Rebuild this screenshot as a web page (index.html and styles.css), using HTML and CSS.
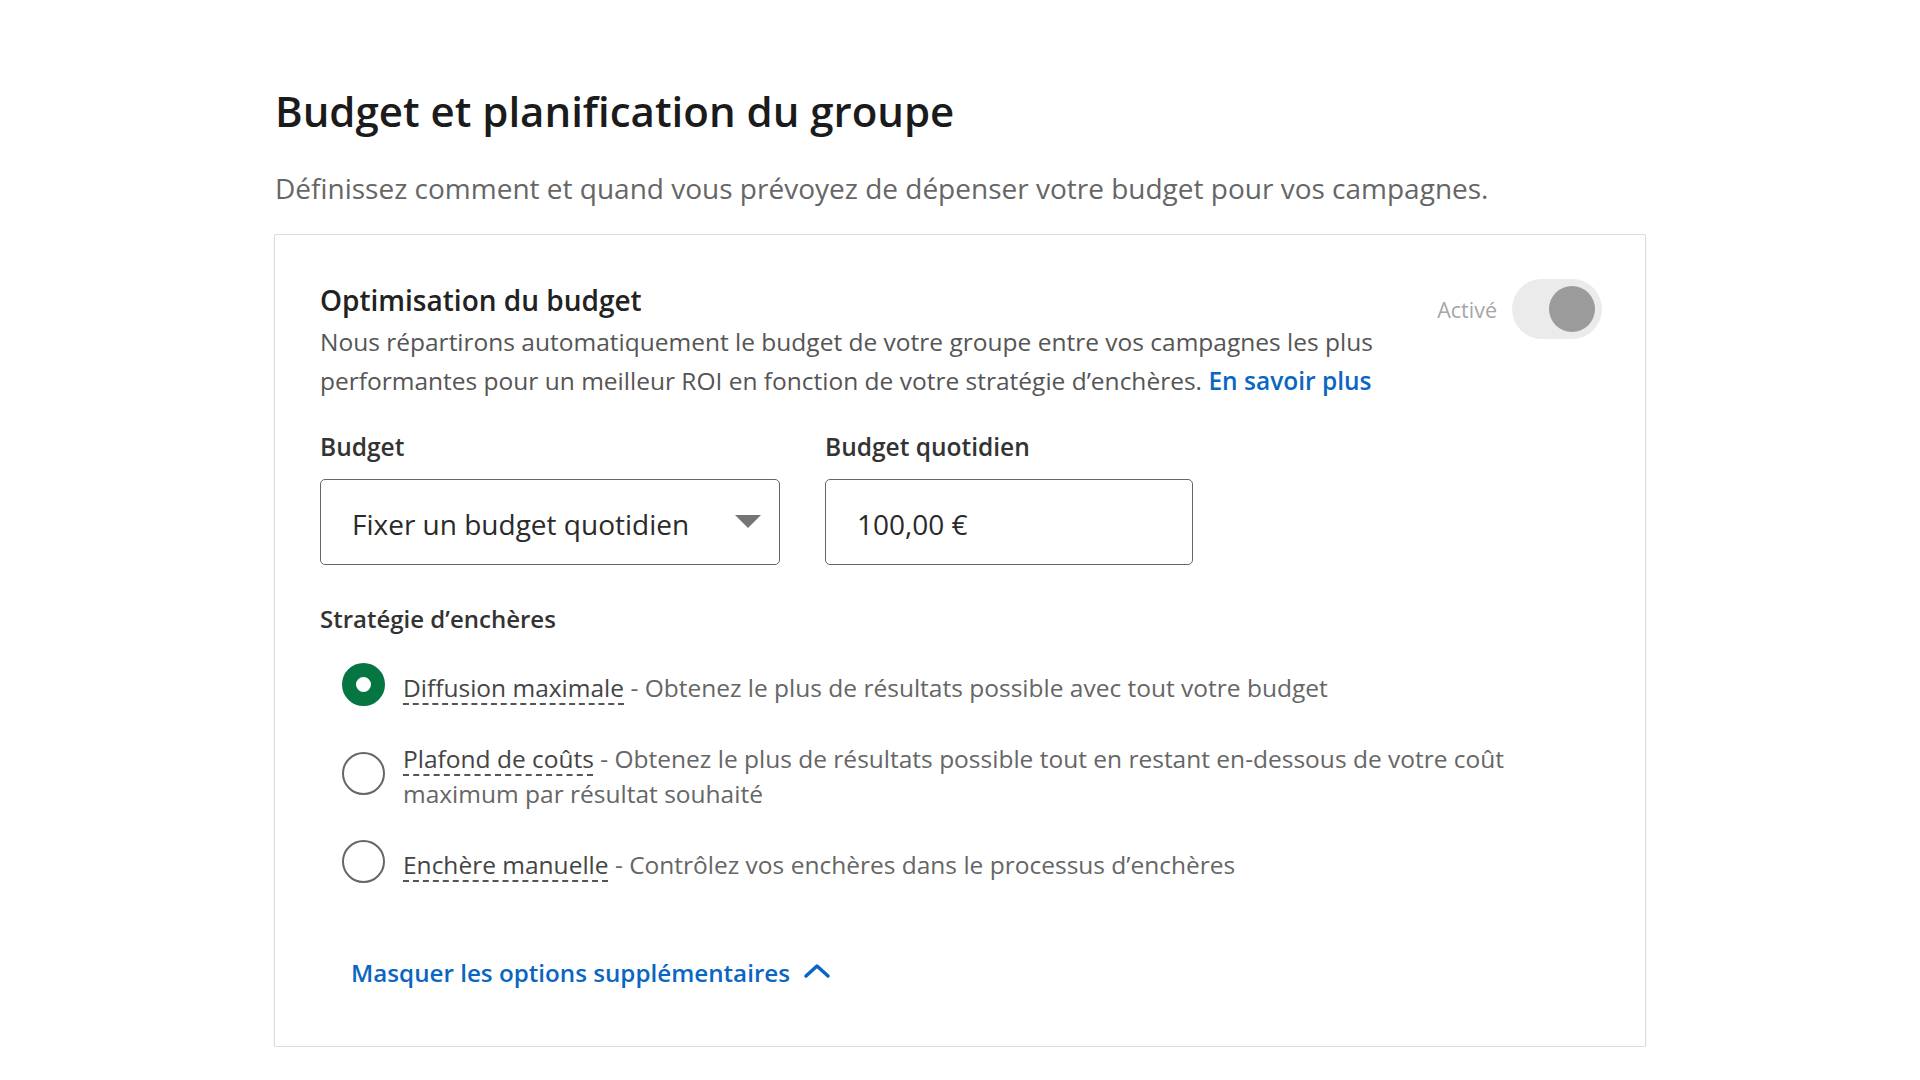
FILE: index.html
```html
<!DOCTYPE html>
<html lang="fr">
<head>
<meta charset="utf-8">
<title>Budget et planification du groupe</title>
<link rel="stylesheet" href="styles.css">
</head>
<body>
<main class="page">
  <h1 class="title">Budget et planification du groupe</h1>
  <p class="subtitle">Définissez comment et quand vous prévoyez de dépenser votre budget pour vos campagnes.</p>

  <section class="card">
    <div class="opt-header">
      <div class="opt-text">
        <h2 class="opt-title">Optimisation du budget</h2>
        <p class="opt-desc">Nous répartirons automatiquement le budget de votre groupe entre vos campagnes les plus performantes pour un meilleur ROI en fonction de votre stratégie d’enchères. <a class="link" href="#">En savoir plus</a></p>
      </div>
      <div class="switch">
        <span class="switch-label">Activé</span>
        <span class="switch-track"><span class="switch-knob"></span></span>
      </div>
    </div>

    <div class="fields">
      <div class="field">
        <span class="field-label">Budget</span>
        <div class="select">
          <span class="control-value">Fixer un budget quotidien</span>
          <svg class="select-arrow" width="26" height="13" viewBox="0 0 26 13"><polygon points="0,0 26,0 13,13" fill="#757575"/></svg>
        </div>
      </div>
      <div class="field">
        <span class="field-label">Budget quotidien</span>
        <div class="input">
          <span class="control-value">100,00 €</span>
        </div>
      </div>
    </div>

    <h3 class="section-label">Stratégie d’enchères</h3>
    <ul class="radios">
      <li class="radio-row">
        <span class="radio radio-checked"></span>
        <span class="radio-text"><span class="radio-name">Diffusion maximale</span> - Obtenez le plus de résultats possible avec tout votre budget</span>
      </li>
      <li class="radio-row">
        <span class="radio"></span>
        <span class="radio-text"><span class="radio-name">Plafond de coûts</span> - Obtenez le plus de résultats possible tout en restant en-dessous de votre coût maximum par résultat souhaité</span>
      </li>
      <li class="radio-row">
        <span class="radio"></span>
        <span class="radio-text"><span class="radio-name">Enchère manuelle</span> - Contrôlez vos enchères dans le processus d’enchères</span>
      </li>
    </ul>

    <a class="more-link" href="#">Masquer les options supplémentaires
      <svg class="chevron" width="30" height="18" viewBox="0 0 30 18"><polyline points="4,14 15,4 26,14" fill="none" stroke="#0a66c2" stroke-width="3.5" stroke-linecap="round" stroke-linejoin="round"/></svg>
    </a>
  </section>
</main>
</body>
</html>
```

FILE: styles.css
```css
* { box-sizing: border-box; }

html, body {
  margin: 0;
  padding: 0;
  background: #ffffff;
}

body {
  font-family: "Open Sans", "Noto Sans", "Liberation Sans", sans-serif;
  color: #333333;
}

.page {
  width: 1372px;
  margin-left: 274px;
  padding-top: 86px;
}

.title {
  margin: 0;
  padding-left: 1px;
  font-size: 42px;
  line-height: 50px;
  font-weight: 600;
  font-stretch: 88%;
  color: #1b1b1b;
}

.subtitle {
  margin: 36px 0 0;
  padding-left: 1px;
  font-size: 28px;
  line-height: 32px;
  font-weight: 400;
  color: #666666;
}

.card {
  margin-top: 30px;
  border: 1px solid #dcdcdc;
  border-radius: 2px;
  box-shadow: 0 1px 2px rgba(0, 0, 0, 0.08);
  padding: 50px 43px 58px 45px;
  background: #ffffff;
}

.opt-header {
  display: flex;
  align-items: flex-start;
  justify-content: space-between;
}

.opt-text {
  width: 1100px;
}

.opt-title {
  margin: 0;
  font-size: 28px;
  line-height: 30px;
  font-weight: 600;
  color: #222222;
}

.opt-desc {
  margin: 7px 0 0;
  font-size: 24.5px;
  line-height: 39px;
  color: #555555;
}

.link {
  color: #0a66c2;
  font-weight: 600;
  text-decoration: none;
}

.switch {
  display: flex;
  align-items: center;
  gap: 15px;
  margin-top: -6px;
}

.switch-label {
  font-size: 21.5px;
  color: #a6a6a6;
}

.switch-track {
  display: flex;
  justify-content: flex-end;
  align-items: center;
  width: 90px;
  height: 60px;
  padding: 0 7px;
  border-radius: 30px;
  background: #ebebeb;
}

.switch-knob {
  width: 46px;
  height: 46px;
  border-radius: 50%;
  background: #9b9b9b;
}

.fields {
  display: flex;
  gap: 45px;
  margin-top: 32px;
}

.field {
  display: flex;
  flex-direction: column;
  gap: 17px;
}

.field-label {
  font-size: 24.5px;
  line-height: 30px;
  font-weight: 600;
  color: #333333;
}

.select,
.input {
  display: flex;
  align-items: center;
  height: 86px;
  border: 1.5px solid #666666;
  border-radius: 5px;
  padding: 0 18px 0 31px;
}

.select {
  width: 460px;
  justify-content: space-between;
}

.input {
  width: 368px;
}

.control-value {
  padding-top: 3px;
  font-size: 28px;
  color: #2a2a2a;
}

.select-arrow {
  margin-top: -2px;
}

.section-label {
  margin: 39px 0 0;
  font-size: 24px;
  line-height: 30px;
  font-weight: 600;
  color: #333333;
}

.radios {
  list-style: none;
  margin: 29px 0 0;
  padding: 0 0 0 22px;
  display: flex;
  flex-direction: column;
  gap: 29px;
}

.radio-row {
  display: flex;
  align-items: center;
  gap: 18px;
  min-height: 43px;
}

.radio {
  flex: none;
  width: 43px;
  height: 43px;
  border-radius: 50%;
  border: 2px solid #666666;
}

.radio-checked {
  border: 14px solid #057642;
}

.radio-text {
  padding-top: 6px;
  font-size: 24.5px;
  line-height: 35px;
  color: #666666;
}

.radio-name {
  color: #444444;
  text-decoration: underline dashed #555555;
  text-decoration-thickness: 1.5px;
  text-underline-offset: 6px;
}

.more-link {
  display: inline-flex;
  align-items: center;
  gap: 12px;
  margin: 75px 0 0 31px;
  font-size: 24.2px;
  line-height: 30px;
  font-weight: 600;
  color: #0a66c2;
  text-decoration: none;
}

.chevron {
  margin-top: -4px;
}
```
